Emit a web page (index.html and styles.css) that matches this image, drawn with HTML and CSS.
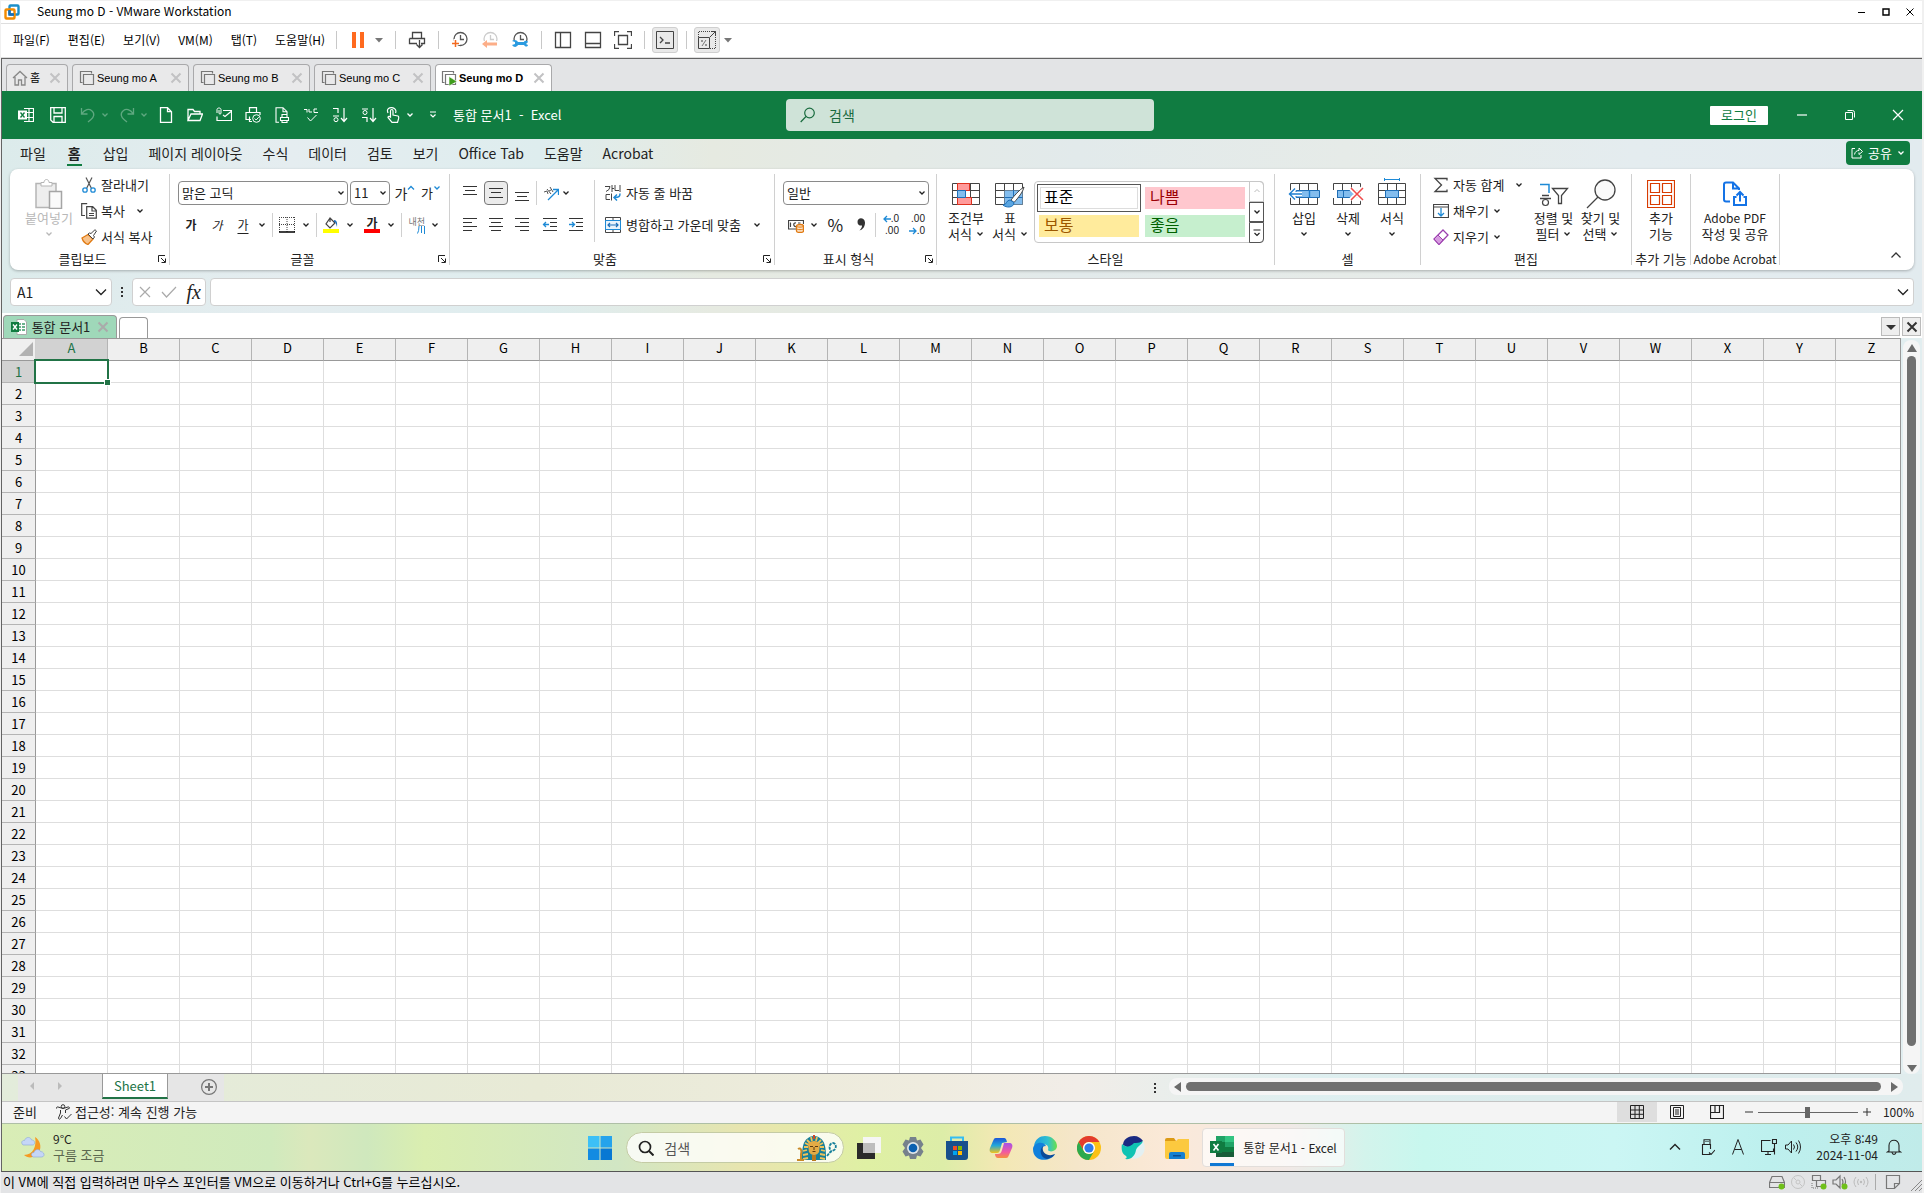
FILE: index.html
```html
<!DOCTYPE html>
<html lang="ko">
<head>
<meta charset="utf-8">
<title>Seung mo D - VMware Workstation</title>
<link rel="stylesheet" href="styles.css">
</head>
<body>
<svg class="defs" aria-hidden="true">
  <symbol id="chev" viewBox="0 0 8 8"><path d="M1.5 2.5 4 5l2.500-2.500" fill="none" stroke="currentColor" stroke-width="1.300"/></symbol>
  <symbol id="chev-lg" viewBox="0 0 12 12"><path d="M1 3.500l5 5 5-5" fill="none" stroke="currentColor" stroke-width="1.300"/></symbol>
  <symbol id="tri" viewBox="0 0 8 8"><path d="M0 2h8L4 6.500z" fill="currentColor"/></symbol>
  <symbol id="x" viewBox="0 0 12 12"><path d="M1.500 1.500l9 9M10.500 1.500l-9 9" fill="none" stroke="currentColor" stroke-width="2"/></symbol>
  <symbol id="x-thin" viewBox="0 0 12 12"><path d="M1 1l10 10M11 1L1 11" fill="none" stroke="currentColor" stroke-width="1.200"/></symbol>
  <symbol id="launch" viewBox="0 0 8 8"><path d="M.5 7V.5H7M3 3l4 4M7.500 3.500v4h-4" fill="none" stroke="currentColor"/></symbol>
  <symbol id="vm" viewBox="0 0 16 16"><path d="M3.500 12.500h-2v-11h11v2M4.500 4.500h10v10h-10z" fill="none" stroke="#777" stroke-width="1.200"/></symbol>
  <symbol id="clock" viewBox="0 0 18 18"><circle cx="9.500" cy="8" r="6.500" fill="none" stroke="currentColor" stroke-width="1.300"/><path d="M9.500 4v4.500H13" fill="none" stroke="currentColor" stroke-width="1.300"/></symbol>
  <symbol id="grid" viewBox="0 0 28 22"><path d="M.5.5h27v21H.5z" fill="#fff"/><path d="M.5.5h27v21H.5zM.5 7.500h27M.5 14.500h27M9.500 0v22M18.500 0v22" fill="none" stroke="#444"/></symbol>
  <symbol id="excel" viewBox="0 0 24 24"><path d="M6 1h9v6H6z" fill="#21a366"/><path d="M15 1h9v6h-9z" fill="#33c481"/><path d="M6 7h9v10H6z" fill="#107c41"/><path d="M15 7h9v5h-9z" fill="#21a366"/><path d="M15 12h9v5h-9z" fill="#107c41"/><path d="M6 17h18v5H6z" fill="#185c37"/><path d="M0 6h12v12H0z" fill="#107c41"/><path d="M3.500 9l5 6.500M8.500 9l-5 6.500" stroke="#fff" stroke-width="1.600"/></symbol>
</svg>

<header class="vm-title">
  <svg class="i16" viewBox="0 0 16 16"><rect x="5.500" y="1.500" width="9" height="9" rx="1" fill="none" stroke="#1b8fc9" stroke-width="2.400"/><rect x="1.500" y="5.500" width="9" height="9" rx="1" fill="none" stroke="#f38b00" stroke-width="2.400"/><path d="M5.500 6V10.500H10" fill="none" stroke="#1b6fb5" stroke-width="2.400"/></svg>
  <span class="vm-title-text">Seung mo D - VMware Workstation</span>
  <div class="win-ctl">
    <button aria-label="최소화"><svg viewBox="0 0 8 8"><path d="M0 4.500h7" stroke="#000"/></svg></button>
    <button aria-label="최대화"><svg viewBox="0 0 8 8"><path d="M1 1h6v6H1z" fill="none" stroke="#000" stroke-width="1.400"/></svg></button>
    <button aria-label="닫기"><svg viewBox="0 0 8 8"><path d="M.5.5l7 7M7.500.5l-7 7" stroke="#000"/></svg></button>
  </div>
</header>

<nav class="vm-menu">
  <div class="vm-menu-items"><button>파일(F)</button><button>편집(E)</button><button>보기(V)</button><button>VM(M)</button><button>탭(T)</button><button>도움말(H)</button></div>
  <i class="vsep"></i>
  <button class="mi" aria-label="일시 중지"><svg class="i18" viewBox="0 0 18 18"><path d="M3 1h4v16H3zM11 1h4v16h-4z" fill="#ff6a1f"/></svg></button>
  <button class="mi-arrow" aria-label="전원"><svg class="i8"><use href="#tri"/></svg></button>
  <i class="vsep"></i>
  <button class="mi" aria-label="Ctrl+Alt+Del 보내기"><svg class="i18" viewBox="0 0 18 18"><path d="M4.500 7V1.500h9V7M1.500 7.500h15v5H13M1.500 7.500v5H9M11.500 9v7M8.500 13.500l3 3 3-3" fill="none" stroke="#444" stroke-width="1.300"/></svg></button>
  <i class="vsep"></i>
  <div class="mi-group">
    <button class="mi" aria-label="스냅샷 찍기"><svg class="i18" viewBox="0 0 18 18"><use href="#clock" color="#555"/><path d="M0 12h9M4.500 8v9" stroke="#fff" stroke-width="4"/><path d="M1 12.500h7M4.500 9v7" stroke="#f36a1f" stroke-width="1.500"/></svg></button>
    <button class="mi" aria-label="스냅샷으로 되돌리기"><svg class="i18" viewBox="0 0 18 18"><use href="#clock" color="#ccc"/><path d="M0 10h18v7H0z" fill="#fff"/><path d="M6 9l-5 4 5 4v-2.500h10v-3H6z" fill="#fcae88"/></svg></button>
    <button class="mi" aria-label="스냅샷 관리"><svg class="i18" viewBox="0 0 18 18"><use href="#clock" color="#555"/><path d="M0 10h18v7H0z" fill="#fff"/><path d="M1 10l3 1v2l-3 1c2 3 5 2 6 0h6c2 3 4 1 4 0l-2-1 2-2c-1-2-4-1-4 0H7c-1-2-4-3-6-1z" fill="#2b9be0"/></svg></button>
  </div>
  <i class="vsep"></i>
  <div class="mi-group">
    <button class="mi" aria-label="라이브러리"><svg class="i18" viewBox="0 0 18 18"><path d="M1.500 1.500h15v15h-15zM6.500 1.500v15" fill="none" stroke="#444" stroke-width="1.300"/></svg></button>
    <button class="mi" aria-label="썸네일"><svg class="i18" viewBox="0 0 18 18"><path d="M1.500 1.500h15v15h-15zM1.500 12.500h15" fill="none" stroke="#444" stroke-width="1.300"/></svg></button>
    <button class="mi" aria-label="전체 화면"><svg class="i18" viewBox="0 0 18 18"><path d="M.5 5V.5H5M13 .5h4.500V5M17.500 13v4.500H13M5 17.500H.5V13M4.500 4.500h9v9h-9z" fill="none" stroke="#444" stroke-width="1.300"/></svg></button>
  </div>
  <i class="vsep"></i>
  <button class="mi on" aria-label="콘솔 보기"><svg class="i18" viewBox="0 0 18 18"><path d="M.5.500h17v17H.5z" fill="none" stroke="#444"/><path d="M4 6l3 3-3 3M9 12h5" fill="none" stroke="#444" stroke-width="1.300"/></svg></button>
  <i class="vsep"></i>
  <button class="mi on" aria-label="화면 맞춤"><svg class="i18" viewBox="0 0 18 18"><path d="M.5 6.500h11v11H.5z" fill="none" stroke="#444"/><path d="M.5 6V.500h17v17H12" fill="none" stroke="#444" stroke-dasharray="1 1"/><path d="M12 6l5-5M13 .500h4.500V5" fill="none" stroke="#444"/><path d="M4 15l4-6" stroke="#777"/><circle cx="4" cy="10" r="1" fill="#777"/><circle cx="8" cy="14" r="1" fill="#777"/></svg></button>
  <button class="mi-arrow tight" aria-label="화면 맞춤 옵션"><svg class="i8"><use href="#tri"/></svg></button>
</nav>

<nav class="vm-tabs">
  <button class="vt home"><svg class="i16" viewBox="0 0 16 16"><path d="M1 8l7-6.500L15 8M3 7v8h3.500v-5h3v5H13V7" fill="none" stroke="#888" stroke-width="1.300"/></svg><span>홈</span><svg class="i12 vx"><use href="#x"/></svg></button>
  <button class="vt"><svg class="i16"><use href="#vm"/></svg><span>Seung mo A</span><svg class="i12 vx"><use href="#x"/></svg></button>
  <button class="vt"><svg class="i16"><use href="#vm"/></svg><span>Seung mo B</span><svg class="i12 vx"><use href="#x"/></svg></button>
  <button class="vt"><svg class="i16"><use href="#vm"/></svg><span>Seung mo C</span><svg class="i12 vx"><use href="#x"/></svg></button>
  <button class="vt active"><svg class="i16" viewBox="0 0 16 16"><use href="#vm"/><path d="M8 6.500l8 5-8 4.500z" fill="#3f9c1c" stroke="#fff" stroke-width=".6"/></svg><span>Seung mo D</span><svg class="i12 vx"><use href="#x"/></svg></button>
</nav>

<main class="guest">
  <header class="xl-title">
    <div class="qat">
      <button aria-label="Excel"><svg class="i16" viewBox="0 0 16 16"><path d="M6 1.500h9.500v13H6M11 1v14M6 5.500h9M6 10.500h9" fill="none" stroke="#fff" stroke-width="1.200"/><path d="M0 3.500h9v9H0z" fill="#fff"/><path d="M2.500 5.500l4 5M6.500 5.500l-4 5" stroke="#107c41" stroke-width="1.300"/></svg></button>
      <button aria-label="저장"><svg class="i16" viewBox="0 0 16 16"><path d="M.7.700h14.600v14.600H3L.7 13zM4 .7V6h8V.7M4 15V9.500h8V15" fill="none" stroke="#fff" stroke-width="1.300"/></svg></button>
      <button class="dim" aria-label="실행 취소"><svg class="i16" viewBox="0 0 16 16"><path d="M1.500 1v6h6M1.500 7C5 2 9 1.500 11.500 3.500c4 3 2 7-.5 9L8 15" fill="none" stroke="currentColor" stroke-width="1.300"/></svg><svg class="i8"><use href="#chev"/></svg></button>
      <button class="dim" aria-label="다시 실행"><svg class="i16" viewBox="0 0 16 16"><path d="M14.500 1v6h-6M14.500 7C11 2 7 1.500 4.500 3.500c-4 3-2 7 .5 9L8 15" fill="none" stroke="currentColor" stroke-width="1.300"/></svg><svg class="i8"><use href="#chev"/></svg></button>
      <button aria-label="새로 만들기"><svg class="i16" viewBox="0 0 16 16"><path d="M2.500.700h7l4 4v10.600h-11zM9.500.7v4h4" fill="none" stroke="#fff" stroke-width="1.300"/></svg></button>
      <button aria-label="열기"><svg class="i16" viewBox="0 0 16 16"><path d="M1 13.500v-11h5l1.500 2H13v2.500M1 13.500L4 7h11.500L13 13.500z" fill="none" stroke="#fff" stroke-width="1.300"/></svg></button>
      <button aria-label="전자 메일"><svg class="i16" viewBox="0 0 16 16"><path d="M7 3.500h8.500v10H1V9.500M7 8l2 1.500 6-5" fill="none" stroke="#fff" stroke-width="1.200"/><path d="M1 6V2.500c0-2 4-2 4 0V6c0 1.500-2 1.500-2 0V3" fill="none" stroke="#fff"/></svg></button>
      <button aria-label="빠른 인쇄"><svg class="i16" viewBox="0 0 16 16"><path d="M4.500 5V.700h7V5M6 12.500H1V5.500h14V8M4.500 9.500v5H7" fill="none" stroke="#fff" stroke-width="1.200"/><circle cx="11.500" cy="11.500" r="3.800" fill="none" stroke="#fff"/><path d="M9.700 11.500l1.500 1.500 2.500-2.800" fill="none" stroke="#fff"/></svg></button>
      <button aria-label="인쇄 미리 보기"><svg class="i16" viewBox="0 0 16 16"><path d="M5 15.300H2V.700h7l4 4V7M9 .7v4h4M8 10V7.500h5V10M6.500 10.500h8v3h-8zM8 13.500v2h5v-2" fill="none" stroke="#fff" stroke-width="1.100"/></svg></button>
      <button aria-label="맞춤법 검사"><svg class="i16" viewBox="0 0 16 16"><path d="M1 2.500h3v3M6 2v3h3M11 2v3.500h4M11 2h3M4.500 10.500L7.500 14l6-6" fill="none" stroke="#fff"/></svg></button>
      <button aria-label="오름차순 정렬"><svg class="i16" viewBox="0 0 16 16"><path d="M1 1.500h5V6M1 9h6M12 1v13M9 11l3 3.500 3-3.500" fill="none" stroke="#fff" stroke-width="1.200"/><circle cx="4" cy="12.700" r="2" fill="none" stroke="#fff"/></svg></button>
      <button aria-label="내림차순 정렬"><svg class="i16" viewBox="0 0 16 16"><path d="M1 2h6M1 10.500h5V15M12 1v13M9 11l3 3.500 3-3.500" fill="none" stroke="#fff" stroke-width="1.200"/><circle cx="4" cy="5.500" r="2" fill="none" stroke="#fff"/></svg></button>
      <button class="touch" aria-label="터치/마우스 모드"><svg class="i16" viewBox="0 0 16 16"><path d="M5.500 10V4c0-2 2.500-2 2.500 0v4l5 1c1 .5 1 1 .5 3l-1 3.300H7L3 10.500c0-1.500 1.500-1.500 2.500-.5zM3 6C1 1 5 .500 7 .700s5 2 3.500 5.300" fill="none" stroke="#fff" stroke-width="1.200"/></svg><svg class="i8"><use href="#chev"/></svg></button>
      <button aria-label="빠른 실행 도구 모음 사용자 지정"><svg class="i8" viewBox="0 0 8 8"><path d="M1 1h6M1.500 3.500L4 6l2.500-2.500" fill="none" stroke="#fff" stroke-width="1.200"/></svg></button>
      <span class="doc">통합 문서1&nbsp; -&nbsp; Excel</span>
    </div>
    <label class="xl-search"><svg class="i16" viewBox="0 0 16 16"><circle cx="9.500" cy="6" r="4.800" fill="none" stroke="#196b3e" stroke-width="1.200"/><path d="M6 9.500L.7 15" stroke="#196b3e" stroke-width="1.200"/></svg><input type="text" placeholder="검색" aria-label="검색"></label>
    <div class="xl-ctl">
      <button class="login">로그인</button>
      <button class="wc" aria-label="최소화"><svg class="i12" viewBox="0 0 12 12"><path d="M1 6h10" stroke="#fff" stroke-width="1.200"/></svg></button>
      <button class="wc" aria-label="이전 크기로"><svg class="i12" viewBox="0 0 12 12"><path d="M1.500 3.500h7v7h-7zM3.500 1.500h5q2 0 2 2v5" fill="none" stroke="#fff"/></svg></button>
      <button class="wc" aria-label="닫기"><svg class="i12"><use href="#x-thin"/></svg></button>
    </div>
  </header>

  <section class="pane">
    <nav class="rtabs">
      <button>파일</button><button class="cur">홈</button><button>삽입</button><button>페이지 레이아웃</button><button>수식</button><button>데이터</button><button>검토</button><button>보기</button><button>Office Tab</button><button>도움말</button><button>Acrobat</button>
      <button class="share"><svg class="i12" viewBox="0 0 12 12"><path d="M4 1.500H1v9.500h9V8M3.500 7.500C4 4.500 6 3.500 8 3.500V1l3.500 3.500L8 7.500V5.500" fill="none" stroke="#fff"/></svg>공유<svg class="i8"><use href="#chev"/></svg></button>
    </nav>

    <div class="ribbon">
      <section class="rg g-clip">
        <div class="rbody">
          <button class="big paste" disabled><span class="bi"><svg width="28" height="30" viewBox="0 0 28 30"><path d="M1 4.500h20v24H1z" fill="#eee" stroke="#b5b5b5" stroke-width="1.500"/><path d="M6 7V3.500h3c0-4 5-4 5 0h3V7z" fill="#fff" stroke="#b5b5b5"/><path d="M14.500 12.500h12v17h-12z" fill="#fafafa" stroke="#a5a5a5" stroke-width="1.500"/></svg></span><span>붙여넣기</span><span><svg class="i8"><use href="#chev"/></svg></span></button>
          <div class="list">
            <button><svg class="i16" viewBox="0 0 16 16"><path d="M5 .5l5.500 11M11 .5L5.500 11.500" stroke="#555" stroke-width="1.200"/><circle cx="4" cy="13" r="2.200" fill="none" stroke="#1e8ad6" stroke-width="1.300"/><circle cx="12" cy="13" r="2.200" fill="none" stroke="#1e8ad6" stroke-width="1.300"/></svg>잘라내기</button>
            <button><svg class="i16" viewBox="0 0 16 16"><path d="M4 12.500H.7V.700h5.500M5.700 3.700h6l3.600 3.500v8H5.700zM11 4v4h4M8 10.500h5M8 12.500h5" fill="none" stroke="#444" stroke-width="1.200"/></svg>복사<svg class="i8 far"><use href="#chev"/></svg></button>
            <button><svg class="i16" viewBox="0 0 16 16"><path d="M1 9l6-3.500 5 4.500-5 5.500c-3-1-5-3-6-6.500z" fill="#f8c28a" stroke="#e07a12" stroke-width="1.300"/><path d="M7 5l5 5 1.500-2-1-1.500L15.500 2 14 .7 10 4.500 8.500 4z" fill="#fff" stroke="#444"/></svg>서식 복사</button>
          </div>
        </div>
        <footer class="opt">클립보드<button aria-label="클립보드 옵션"><svg class="i8"><use href="#launch"/></svg></button></footer>
      </section>

      <section class="rg g-font">
        <div class="rbody rows">
          <div class="row">
            <label class="sel fname"><select aria-label="글꼴"><option>맑은 고딕</option></select><svg class="i8"><use href="#chev"/></svg></label>
            <label class="sel fsize"><select aria-label="글꼴 크기"><option>11</option></select><svg class="i8"><use href="#chev"/></svg></label>
            <button class="tool lg">가<svg class="i8 sup blue" viewBox="0 0 8 8"><path d="M1 5.500L4 2.500l3 3" fill="none" stroke="currentColor" stroke-width="1.300"/></svg></button>
            <button class="tool">가<svg class="i8 sup blue"><use href="#chev"/></svg></button>
          </div>
          <div class="row">
            <button class="tool b">가</button><button class="tool it">가</button><button class="tool u">가</button><button class="cv" aria-label="밑줄 옵션"><svg class="i8"><use href="#chev"/></svg></button>
            <i class="tsep"></i>
            <button class="tool" aria-label="테두리"><svg class="i16" viewBox="0 0 16 16"><path d="M.5 0v15M8 0v15M15.500 0v15M0 .5h16M0 7.500h16" stroke="#444" stroke-dasharray="1 1" fill="none"/><path d="M0 15h16" stroke="#000" stroke-width="1.500"/></svg></button><button class="cv" aria-label="테두리 옵션"><svg class="i8"><use href="#chev"/></svg></button>
            <i class="tsep"></i>
            <button class="tool" aria-label="채우기 색"><svg class="i16" viewBox="0 0 16 16"><path d="M0 12h16v4H0z" fill="#ff0"/><path d="M7 1L3 7l4 4 5-5zM7 1v4" fill="#fff" stroke="#444" stroke-width="1.200"/><path d="M11 3c3 0 3.500 3 3 7-1-3-1-5-3-5z" fill="#1e6fb8"/></svg></button><button class="cv" aria-label="채우기 색 옵션"><svg class="i8"><use href="#chev"/></svg></button>
            <button class="tool fc">가</button><button class="cv" aria-label="글꼴 색 옵션"><svg class="i8"><use href="#chev"/></svg></button>
            <i class="tsep"></i>
            <button class="tool ruby"><span>내천</span><svg class="i8" viewBox="0 0 8 8"><path d="M2 0q0 5-1.500 7.500M4.500 0v7M7.500 0v8" fill="none" stroke="#1e8ad6"/></svg></button><button class="cv" aria-label="윗주 옵션"><svg class="i8"><use href="#chev"/></svg></button>
          </div>
        </div>
        <footer class="opt">글꼴<button aria-label="글꼴 옵션"><svg class="i8"><use href="#launch"/></svg></button></footer>
      </section>

      <section class="rg g-align">
        <div class="rbody">
          <div class="rows left">
            <div class="row">
              <button class="tool" aria-label="위쪽 맞춤"><svg class="i16" viewBox="0 0 16 16"><path d="M1 1.500h14M3 5.500h10M1 9.500h14" stroke="#333"/></svg></button>
              <button class="tool on" aria-label="가운데 맞춤"><svg class="i16" viewBox="0 0 16 16"><path d="M1 3.500h14M3 7.500h10M1 12.500h14" stroke="#333"/></svg></button>
              <button class="tool" aria-label="아래쪽 맞춤"><svg class="i16" viewBox="0 0 16 16"><path d="M1 7.500h14M3 11.500h10M1 15.500h14" stroke="#333"/></svg></button>
              <i class="asep"></i>
              <button class="tool" aria-label="방향"><svg class="i16" viewBox="0 0 16 16"><path d="M5 15L15 5M10 4.500h5.500V10" fill="none" stroke="#1e8ad6" stroke-width="1.300"/><path d="M1 7l3-1 1 3M4 4l4 5M7 2l3 5M6 6l2-1" fill="none" stroke="#555"/></svg></button><button class="cv" aria-label="방향 옵션"><svg class="i8"><use href="#chev"/></svg></button>
            </div>
            <div class="row">
              <button class="tool" aria-label="왼쪽 맞춤"><svg class="i16" viewBox="0 0 16 16"><path d="M1 1.500h14M1 5.500h9M1 9.500h14M1 13.500h9" stroke="#333"/></svg></button>
              <button class="tool" aria-label="가로 가운데"><svg class="i16" viewBox="0 0 16 16"><path d="M1 1.500h14M3 5.500h10M1 9.500h14M3 13.500h10" stroke="#333"/></svg></button>
              <button class="tool" aria-label="오른쪽 맞춤"><svg class="i16" viewBox="0 0 16 16"><path d="M1 1.500h14M6 5.500h9M1 9.500h14M6 13.500h9" stroke="#333"/></svg></button>
              <i class="asep"></i>
              <button class="tool" aria-label="내어쓰기"><svg class="i16" viewBox="0 0 16 16"><path d="M1 1.500h14M8 5.500h7M8 9.500h7M1 13.500h14" stroke="#333"/><path d="M7 7.500H1.500M4 5L1.500 7.500 4 10" fill="none" stroke="#1e8ad6" stroke-width="1.300"/></svg></button>
              <button class="tool" aria-label="들여쓰기"><svg class="i16" viewBox="0 0 16 16"><path d="M1 1.500h14M8 5.500h7M8 9.500h7M1 13.500h14" stroke="#333"/><path d="M1 7.500h5.500M4 5l2.500 2.500L4 10" fill="none" stroke="#1e8ad6" stroke-width="1.300"/></svg></button>
            </div>
          </div>
          <i class="bsep"></i>
          <div class="rows wrapcol">
            <button class="wide"><svg class="i16" viewBox="0 0 16 16"><path d="M0 1.500h5Q5 5 1 6.500M7 0v7M7 3.500h2M10 0v5.500h4M15 0v7M1 9.500v5h4M1 9.500h4M6.500 8.500v7" fill="none" stroke="#444"/><path d="M15 8.500c0 3-1 4-5.500 4M12 9.500l-3 3 3 3" fill="none" stroke="#1e8ad6" stroke-width="1.500"/></svg>자동 줄 바꿈</button>
            <button class="wide"><svg class="i16" viewBox="0 0 16 16"><path d="M.5.500h15v15H.5zM.5 3.500h15M.5 12.500h15M8 .5v3M8 12.500v3" fill="none" stroke="#444"/><path d="M.5 3.500h15v9H.5z" fill="#eaf4fc" stroke="#1e8ad6"/><path d="M3 8h10M5 6L3 8l2 2M11 6l2 2-2 2" fill="none" stroke="#1e6fb8" stroke-width="1.200"/></svg>병합하고 가운데 맞춤<svg class="i8 far"><use href="#chev"/></svg></button>
          </div>
        </div>
        <footer class="opt">맞춤<button aria-label="맞춤 옵션"><svg class="i8"><use href="#launch"/></svg></button></footer>
      </section>

      <section class="rg g-num">
        <div class="rbody rows">
          <div class="row"><label class="sel"><select aria-label="표시 형식"><option>일반</option></select><svg class="i8"><use href="#chev"/></svg></label></div>
          <div class="row">
            <button class="tool" aria-label="회계 표시 형식"><svg class="i16" viewBox="0 0 16 16"><path d="M8 12H.5V3.500h15V7M3 6H2.500v3.500H3M8 6C5 5 5 10 8 9.500M10 6h2.500" fill="none" stroke="#444" stroke-width="1.200"/><path d="M8.500 9c0-2 7-2 7 0v5c0 2-7 2-7 0z" fill="#fbe0c4" stroke="#e07a12" stroke-width="1.300"/><path d="M8.500 9c0 1.500 7 1.500 7 0M8.500 11.500c0 1.500 7 1.500 7 0" fill="none" stroke="#e07a12"/></svg></button><button class="cv" aria-label="회계 옵션"><svg class="i8"><use href="#chev"/></svg></button>
            <button class="tool pct">%</button>
            <button class="tool" aria-label="쉼표 스타일"><svg class="i16" viewBox="0 0 16 16"><path d="M4.500 5c0-5 7-5 7.500.5 0 4-2 7-5.500 8 2-2 2.500-3.500 2.500-5-2 .5-4.500-.5-4.500-3.500z" fill="#333"/></svg></button>
            <i class="asep"></i>
            <button class="tool dec"><span><svg class="i8 blue" viewBox="0 0 8 8"><path d="M8 4H1M4 1L1 4l3 3" fill="none" stroke="currentColor" stroke-width="1.300"/></svg>.0</span><span>.00</span></button>
            <button class="tool dec"><span>.00</span><span><svg class="i8 blue" viewBox="0 0 8 8"><path d="M0 4h7M4 1l3 3-3 3" fill="none" stroke="currentColor" stroke-width="1.300"/></svg>.0</span></button>
          </div>
        </div>
        <footer class="opt">표시 형식<button aria-label="표시 형식 옵션"><svg class="i8"><use href="#launch"/></svg></button></footer>
      </section>

      <section class="rg g-style">
        <div class="rbody">
          <button class="big"><span class="bi"><svg width="28" height="22" viewBox="0 0 28 22"><use href="#grid"/><path d="M5.500.500h12v7h-12zM5.500 14.500h14v7h-14z" fill="#ff9a9a" stroke="#e0301e"/><path d="M5.500 7.500h8v7h-8z" fill="#83bdee" stroke="#1e6fb8"/></svg></span><span>조건부</span><span>서식 <svg class="i8"><use href="#chev"/></svg></span></button>
          <button class="big"><span class="bi"><svg width="32" height="28" viewBox="0 0 32 28"><svg x="1" y="3" width="28" height="22"><use href="#grid"/></svg><path d="M10.500 10.500h18v14h-18z" fill="#83bdee"/><path d="M10.500 17.500h18M19.500 10v14" stroke="#1e6fb8"/><path d="M30 7C25 10 20 16 17 20l3 2.500C24 18 29 12 30 7z" fill="#fff" stroke="#444"/><path d="M16 20c-4 0-3 5-7 5 3 3 11 3 11-2.500z" fill="#5aa5e0" stroke="#1e6fb8"/></svg></span><span>표</span><span>서식 <svg class="i8"><use href="#chev"/></svg></span></button>
          <div class="gallery">
            <div class="cells"><button class="c-std">표준</button><button class="c-bad">나쁨</button><button class="c-neu">보통</button><button class="c-good">좋음</button></div>
            <div class="gscroll"><button aria-label="위로" class="off"><svg class="i8" viewBox="0 0 8 8"><path d="M1.500 5L4 2.500 6.500 5" fill="none" stroke="currentColor"/></svg></button><button aria-label="아래로"><svg class="i8"><use href="#chev"/></svg></button><button aria-label="자세히"><svg class="i8" viewBox="0 0 8 8"><path d="M.5 1h7M1.500 4L4 6.500 6.500 4" fill="none" stroke="currentColor" stroke-width="1.200"/></svg></button></div>
          </div>
        </div>
        <footer>스타일</footer>
      </section>

      <section class="rg g-cell">
        <div class="rbody">
          <button class="big"><span class="bi"><svg width="32" height="22" viewBox="0 0 32 22"><svg x="2" width="28" height="22"><use href="#grid"/></svg><path d="M8 7.500h23.500v7H8z" fill="#83bdee" stroke="#1e6fb8"/><path d="M14 11H2M7 5.500L1.500 11 7 16.500" fill="none" stroke="#fff" stroke-width="4"/><path d="M14 11H1.500M7 5.500L1.500 11 7 16.500M21.500 7.500v7" fill="none" stroke="#1e7fd0" stroke-width="1.400"/></svg></span><span>삽입</span><span><svg class="i8"><use href="#chev"/></svg></span></button>
          <button class="big"><span class="bi"><svg width="32" height="22" viewBox="0 0 32 22"><svg x="1" width="28" height="22"><use href="#grid"/></svg><path d="M0 7h5v8H0z" fill="#fff"/><path d="M5.500 7.500h16v7h-16zM11.500 7.500v7" fill="#83bdee" stroke="#1e6fb8"/><path d="M19 5l12 12M31 5L19 17" stroke="#fff" stroke-width="5"/><path d="M19 5l12 12M31 5L19 17" stroke="#f04a4a" stroke-width="1.500"/></svg></span><span>삭제</span><span><svg class="i8"><use href="#chev"/></svg></span></button>
          <button class="big"><span class="bi"><svg width="28" height="32" viewBox="0 0 28 32"><svg y="5" width="28" height="22"><use href="#grid"/></svg><path d="M7.500 12.500h13v7h-13z" fill="#83bdee" stroke="#1e6fb8"/><path d="M6.500 1.500h15M6.500 0v3M21.500 0v3" stroke="#1e8ad6"/></svg></span><span>서식</span><span><svg class="i8"><use href="#chev"/></svg></span></button>
        </div>
        <footer>셀</footer>
      </section>

      <section class="rg g-edit">
        <div class="rbody">
          <div class="list">
            <button><svg class="i16" viewBox="0 0 16 16"><path d="M14 3.500V1.500H2L8.500 8 2 14.500h12v-2" fill="none" stroke="#444" stroke-width="1.300"/></svg>자동 합계<svg class="i8 far"><use href="#chev"/></svg></button>
            <button><svg class="i16" viewBox="0 0 16 16"><path d="M.5 1.500h15v13H.5zM.5 4h15" fill="none" stroke="#444" stroke-width="1.200"/><path d="M8 5v8M5 10l3 3 3-3" fill="none" stroke="#1e8ad6" stroke-width="1.300"/></svg>채우기<svg class="i8"><use href="#chev"/></svg></button>
            <button><svg class="i16" viewBox="0 0 16 16"><path d="M10 1l5 5-9 9.500L1 10z" fill="#fff" stroke="#9b3fae" stroke-width="1.300"/><path d="M5 6l5 5-4 4.500L1 10z" fill="#d79be0" stroke="#9b3fae"/></svg>지우기<svg class="i8"><use href="#chev"/></svg></button>
          </div>
          <button class="big"><span class="bi"><svg width="30" height="26" viewBox="0 0 30 26"><path d="M1 3.500h9V12" fill="none" stroke="#1e8ad6" stroke-width="1.500"/><path d="M3 14.500h7M1 17.500h11M13.500 7.500h15l-6 7v8h-3v-8z" fill="none" stroke="#444" stroke-width="1.300"/><circle cx="6.500" cy="21.500" r="3" fill="none" stroke="#444" stroke-width="1.200"/></svg></span><span>정렬 및</span><span>필터 <svg class="i8"><use href="#chev"/></svg></span></button>
          <button class="big"><span class="bi"><svg width="30" height="30" viewBox="0 0 30 30"><circle cx="19" cy="11" r="10" fill="#fafafa" stroke="#444" stroke-width="1.300"/><path d="M12 18L1 29" stroke="#444" stroke-width="1.300"/></svg></span><span>찾기 및</span><span>선택 <svg class="i8"><use href="#chev"/></svg></span></button>
        </div>
        <footer>편집</footer>
      </section>

      <section class="rg g-add">
        <div class="rbody"><button class="big"><span class="bi"><svg width="28" height="28" viewBox="0 0 28 28"><path d="M.5.500h27v27H.5zM3.500 3.500h9v9h-9zM15.500 3.500h9v9h-9zM3.500 15.500h9v9h-9zM15.500 15.500h9v9h-9z" fill="none" stroke="#d83b01" stroke-width="1.200"/></svg></span><span>추가</span><span>기능</span></button></div>
        <footer>추가 기능</footer>
      </section>
      <section class="rg g-adobe">
        <div class="rbody"><button class="big"><span class="bi"><svg width="24" height="26" viewBox="0 0 24 26"><path d="M7 20.500H3q-2 0-2-2v-15q0-2 2-2h7l6 6V9M10 2v5.500h6M13.500 16H11v8h12v-8h-2.500M17 20.500v-9M13.500 14.500L17 11l3.500 3.500" fill="none" stroke="#1473e6" stroke-width="2"/></svg></span><span class="lat">Adobe PDF</span><span>작성 및 공유</span></button></div>
        <footer class="lat">Adobe Acrobat</footer>
      </section>
      <button class="collapse" aria-label="리본 축소"><svg class="i12" viewBox="0 0 12 12"><path d="M1.500 8.500L6 4l4.500 4.500" fill="none" stroke="#333" stroke-width="1.300"/></svg></button>
    </div>

    <div class="fbar">
      <label class="box name"><input type="text" value="A1" aria-label="이름 상자"><svg class="i12"><use href="#chev-lg"/></svg></label>
      <svg class="dots" viewBox="0 0 4 12"><path d="M1 1h2v2H1zM1 5h2v2H1zM1 9h2v2H1z" fill="#333"/></svg>
      <div class="box fx">
        <button aria-label="취소"><svg class="i12"><use href="#x-thin"/></svg></button>
        <button aria-label="입력"><svg class="i16" viewBox="0 0 16 16"><path d="M1 8l4.500 5L15 3" fill="none" stroke="currentColor" stroke-width="1.200"/></svg></button>
        <button class="fxb">fx</button>
      </div>
      <label class="box formula"><input type="text" aria-label="수식 입력줄"><svg class="i12"><use href="#chev-lg"/></svg></label>
    </div>
  </section>

  <nav class="otabs">
    <button class="ot"><svg class="i16" viewBox="0 0 16 16"><path d="M6 .500h7l2.500 2.500v12.500H6z" fill="#fff" stroke="#aaa"/><path d="M8 5h2M11 5h3M8 8h2M11 8h3M8 11h2M11 11h3" stroke="#3d9a68" stroke-width="1.500"/><path d="M0 3h8v10H0z" fill="#107c41"/><path d="M2 5.500l4 5M6 5.500l-4 5" stroke="#fff" stroke-width="1.400"/></svg>통합 문서1<svg class="i12 vx"><use href="#x"/></svg></button>
    <button class="ot-new" aria-label="새 탭"></button>
    <button class="ob first" aria-label="탭 목록"><svg class="i12" viewBox="0 0 12 12"><path d="M1 4h10L6 9z" fill="#333"/></svg></button>
    <button class="ob" aria-label="탭 닫기"><svg class="i12"><use href="#x"/></svg></button>
  </nav>

  <div class="sheet">
    <div class="cells-view"><table class="cells-table" id="cells"></table></div>
    <div class="vscroll"><svg class="i12" viewBox="0 0 12 12"><path d="M6 2l5 8H1z" fill="#6b6b6b"/></svg><i></i><svg class="i12" viewBox="0 0 12 12"><path d="M1 3h10L6 10z" fill="#6b6b6b"/></svg></div>
  </div>

  <div class="sbar">
    <div class="snav">
      <button aria-label="이전 시트"><svg class="i8" viewBox="0 0 8 8"><path d="M6 0v8L2 4z" fill="#bbb"/></svg></button>
      <button aria-label="다음 시트"><svg class="i8" viewBox="0 0 8 8"><path d="M2 0v8l4-4z" fill="#bbb"/></svg></button>
      <button class="stab">Sheet1</button>
      <button class="splus" aria-label="새 시트"><svg class="i16" viewBox="0 0 16 16"><circle cx="8" cy="8" r="7.400" fill="none" stroke="#777" stroke-width="1.200"/><path d="M4 8h8M8 4v8" stroke="#777" stroke-width="2"/></svg></button>
    </div>
    <svg class="dots" viewBox="0 0 4 12"><path d="M1 1h2v2H1zM1 5h2v2H1zM1 9h2v2H1z" fill="#333"/></svg>
    <div class="hscroll"><svg class="i12" viewBox="0 0 12 12"><path d="M2 6l7-5v10z" fill="#6b6b6b"/></svg><i></i><svg class="i12" viewBox="0 0 12 12"><path d="M10 6L3 1v10z" fill="#6b6b6b"/></svg></div>
  </div>

  <footer class="status">
    <span>준비</span>
    <button class="acc"><svg class="i16" viewBox="0 0 16 16"><circle cx="7" cy="2.500" r="1.800" fill="none" stroke="#333"/><path d="M1 4.500c-1 0-.5-2 1-1.500l5 1.500 5-1.500c1.500-.5 2 1.500 1 1.500L9.500 6v3M4.500 6v3l-2 5c0 1.500 1.500 1.500 2 .5L6.500 11M8.500 12.500l2 2.500 5-5" fill="none" stroke="#333"/></svg>접근성: 계속 진행 가능</button>
    <div class="views">
      <button class="on" aria-label="기본"><svg class="i14" viewBox="0 0 14 14"><path d="M.5.500h13v13H.5zM.5 5h13M.5 9.300h13M5 .5v13M9.300.5v13" fill="none" stroke="#222"/></svg></button>
      <button aria-label="페이지 레이아웃"><svg class="i14" viewBox="0 0 14 14"><path d="M.5.500h13v13H.5zM3.500 2.500h7v9h-7zM5 5h4M5 7h4M5 9h4" fill="none" stroke="#222"/></svg></button>
      <button aria-label="페이지 나누기"><svg class="i14" viewBox="0 0 14 14"><path d="M.5.500h13v13H.5zM5 .5v7h4.500v-7M.5 7.500H5" fill="none" stroke="#222" stroke-width="1.200"/></svg></button>
    </div>
    <div class="zoom"><button aria-label="축소"><svg class="i8" viewBox="0 0 8 8"><path d="M0 4h8" stroke="#333"/></svg></button><input type="range" min="0" max="100" value="50" aria-label="확대/축소"><button aria-label="확대"><svg class="i8" viewBox="0 0 8 8"><path d="M0 4h8M4 0v8" stroke="#333"/></svg></button><span>100%</span></div>
  </footer>

  <footer class="taskbar">
    <div class="weather"><svg width="24" height="24" viewBox="0 0 24 24"><path d="M14 2c5 3 7 10 4 15-3 6-11 7-15 3 9 0 13-9 11-18z" fill="#f59a23"/><path d="M2 10c-3-3 0-5 1.500-4.500C5 1 10 2 10.500 5c4 0 4 5 1 5z" fill="#c5d6f7" stroke="#8aa6dc" stroke-width=".6"/><path d="M12 22c-3-2-1-5 1-4.500 1-4 6-3.500 6.500-1 4 0 5 5.500 1 5.500z" fill="#c5d6f7" stroke="#8aa6dc" stroke-width=".6"/></svg><p><b>9°C</b><br>구름 조금</p></div>
    <div class="apps">
      <button class="start" aria-label="시작"><svg class="i24" viewBox="0 0 24 24"><path d="M0 0h11.500v11.500H0z" fill="#3cc0f7"/><path d="M12.500 0H24v11.500H12.500z" fill="#25a3ec"/><path d="M0 12.500h11.500V24H0z" fill="#128be2"/><path d="M12.500 12.500H24V24H12.500z" fill="#0878d3"/></svg></button>
      <label class="tsearch"><svg class="i16" viewBox="0 0 16 16"><circle cx="7" cy="7" r="5.500" fill="none" stroke="#222" stroke-width="1.700"/><path d="M11 11l4.500 4.500" stroke="#222" stroke-width="2"/></svg><input type="text" placeholder="검색" aria-label="작업 표시줄 검색"><svg width="40" height="26" viewBox="0 0 40 26"><path d="M5 25C5 14 5 2 17 1c12 1 12 13 12 24z" fill="#17809a"/><path d="M6 24l5-1M6 20l5-1M6 16l4-1M7 12l4 0M8 8l4 2M10 5l3 3M14 2l1 4M28 24l-5-1M28 20l-5-1M28 16l-4-1M27 12l-4 0M26 8l-4 2M24 5l-3 3M20 2l-1 4" stroke="#efc25a" stroke-width="1.800"/><path d="M11 9c2-4 10-4 12 0l-1 8c-2 4-8 4-10 0z" fill="#e3ab45"/><path d="M13 11.500h3M18 11.500h3M15.500 16.500h3M17 12v3" stroke="#5a3a13"/><path d="M15 20h4v6h-4z" fill="#b97a1f"/><path d="M17 0v4" stroke="#d04a2a" stroke-width="2"/><path d="M1 14c3-2 4 2 3 5v6M0 25h7" fill="none" stroke="#c98a28" stroke-width="2"/><path d="M30 21l4-5c-3-4-1-8 2-8s4 5 1 7l-5 3" fill="none" stroke="#17809a" stroke-width="1.800" stroke-dasharray="3 1"/></svg></label>
      <button aria-label="작업 보기"><svg class="i24" viewBox="0 0 24 24"><path d="M0 7h18v16H0z" fill="#2a2a2a"/><path d="M6 1h18v16H6z" fill="#f5f5f5"/><path d="M6 7h12v10H6z" fill="#bdbdbd"/></svg></button>
      <button aria-label="설정"><svg class="i24" viewBox="0 0 24 24"><path d="M9 1h6l1 3.500 3.500-1 3 5-2.500 3.500 2.500 3.500-3 5-3.500-1L15 23H9l-1-3.500-3.500 1-3-5L4 12 1.500 8.500l3-5 3.500 1z" fill="#76818c"/><circle cx="12" cy="12" r="6" fill="#dfe5ea"/><circle cx="12" cy="12" r="4.300" fill="#0a5fb0"/></svg></button>
      <button aria-label="스토어"><svg class="i24" viewBox="0 0 24 24"><path d="M6 5V1.500h12V5" fill="none" stroke="#35bdf2" stroke-width="2"/><path d="M1 5h22v16q0 3-3 3H4q-3 0-3-3z" fill="#17508c"/><path d="M8 10h4v4H8z" fill="#f25022"/><path d="M13 10h4v4h-4z" fill="#7fba00"/><path d="M8 15h4v4H8z" fill="#00a4ef"/><path d="M13 15h4v4h-4z" fill="#ffb900"/></svg></button>
      <button aria-label="Copilot"><svg class="i24" viewBox="0 0 24 24"><defs><linearGradient id="cp1" x2="0" y2="1"><stop stop-color="#1b55d8"/><stop offset=".5" stop-color="#23a7d8"/><stop offset="1" stop-color="#f2c31c"/></linearGradient><linearGradient id="cp2" x2="0" y2="1"><stop stop-color="#a552e8"/><stop offset=".6" stop-color="#f25aa0"/><stop offset="1" stop-color="#f7913d"/></linearGradient></defs><path d="M7 2h8c2 0 2 1 3 4l-5 1-2 7c-1 3-2 3-4 3H4c-3 0-4-2-3-5l3-7c1-2 1-3 3-3z" fill="url(#cp1)"/><path d="M17 22H9c-2 0-3-2-3-4h3c2 0 3-1 4-4l2-7h5c3 0 4 2 3 5l-3 7c-1 2-1 3-3 3z" fill="url(#cp2)"/></svg></button>
      <button aria-label="Edge"><svg class="i24" viewBox="0 0 24 24"><defs><linearGradient id="ed"><stop stop-color="#1c9be0"/><stop offset=".6" stop-color="#2fc0d0"/><stop offset="1" stop-color="#6be04a"/></linearGradient></defs><path d="M1 10C2 3 7 0 12 0c7 0 12 5 12 10 0 5-7 7-9 4 1-2 0-6-5-6-4 0-7 1-9 2z" fill="url(#ed)"/><path d="M0 13c0-6 10-9 13-3-5 0-5 5-3 8 3 4 9 3 12 0-4 8-22 9-22-5z" fill="#1180dc"/><path d="M10 10c-4 3-3 12 4 13 4-1 7-3 8-5-6 3-14 0-12-8z" fill="#0c4a98"/></svg></button>
      <button aria-label="Chrome"><svg class="i24" viewBox="0 0 24 24"><circle cx="12" cy="12" r="12" fill="#fbc116"/><path d="M1.600 6A12 12 0 0122.400 6H12a6 6 0 00-5.200 9z" fill="#e33b2e"/><path d="M1.600 6A12 12 0 0012 24l5.200-9a6 6 0 01-10.400 0z" fill="#2da94f"/><circle cx="12" cy="12" r="6" fill="#fff"/><circle cx="12" cy="12" r="4.600" fill="#2f7bea"/></svg></button>
      <button aria-label="Whale"><svg class="i24" viewBox="0 0 24 24"><path d="M2 9C2 3 8 0 13 0c4 0 7 2 9 5l-6 4-8 3z" fill="#1a2a82"/><path d="M22 5c4 8 1 18-11 18 0-6 3-12 11-18z" fill="#e3f0f2"/><path d="M1 8c5 4 8 3 12-1 2 0 6 0 9-2-1 4-6 5-7 9-1 6-5 10-11 9 2-1 2-2 1-3C1 18 0 13 1 8z" fill="#10c3b3"/></svg></button>
      <button aria-label="파일 탐색기"><svg class="i24" viewBox="0 0 24 24"><path d="M0 4q0-2 2-2h7l2 3H0z" fill="#dc9a16"/><path d="M0 5h11l2-2h11v18q0 2-2 2H2q-2 0-2-2z" fill="#fcc93f"/><path d="M4 23v-5q0-2 2-2h12q2 0 2 2v5z" fill="#1580d0"/><path d="M8 19h8v1.500H8z" fill="#0c4c90"/></svg></button>
      <button class="xl-task"><span><svg class="i24"><use href="#excel"/></svg></span>통합 문서1 - Excel</button>
    </div>
    <div class="tray">
      <svg class="i12" viewBox="0 0 12 12"><path d="M1 8.500l5-5 5 5" fill="none" stroke="#222" stroke-width="1.400"/></svg>
      <svg class="i16" viewBox="0 0 16 16"><path d="M5 5V.700h6V5M11.500 10V5.500h-8v10H11M7 2v1M9 2v1M10 13.500l2 2 4-4.500" fill="none" stroke="#222" stroke-width="1.100"/></svg>
      <svg class="i16" viewBox="0 0 16 16"><path d="M2.500 15.500L8 .500l5.500 15M4.500 10.500h7" fill="none" stroke="#222"/></svg>
      <svg class="i16" viewBox="0 0 16 16"><path d="M9.500 1.500h-9v11h12V9.500M4 15.500h6M7 12.500v3M11.500.500h4v4h-4zM13.500 4.500v11" fill="none" stroke="#222" stroke-width="1.100"/></svg>
      <svg class="i16" viewBox="0 0 16 16"><path d="M.5 6h2.500l3.500-4v12L3 10H.5zM8.500 5.500q2 2.500 0 5M11 3.500q3.500 4.500 0 9M13.500 1.500q4 6.500 0 13" fill="none" stroke="#222"/></svg>
      <time>오후 8:49<br>2024-11-04</time>
      <svg class="i16" viewBox="0 0 16 16"><path d="M3 12V6.500c0-7 10-7 10 0V12l1.500 1h-13zM6 13.500c.5 2.500 3.500 2.500 4 0" fill="none" stroke="#222" stroke-width="1.100"/></svg>
    </div>
  </footer>
</main>

<footer class="vm-status">
  <span>이 VM에 직접 입력하려면 마우스 포인터를 VM으로 이동하거나 Ctrl+G를 누르십시오.</span>
  <div class="dev">
    <svg class="i16" viewBox="0 0 16 16"><path d="M3 2.500h10l2.500 6v5H.5v-5zM.5 8.500h15" fill="none" stroke="#777" stroke-width="1.200"/><circle cx="12.500" cy="12.500" r="3" fill="#6fc01a"/></svg>
    <svg class="i16" viewBox="0 0 16 16"><circle cx="8" cy="8" r="6.500" fill="none" stroke="#c4c4c4"/><circle cx="8" cy="8" r="2" fill="none" stroke="#c4c4c4"/><path d="M4 4l2 2M10 10l2 2" stroke="#c4c4c4"/></svg>
    <svg class="i16" viewBox="0 0 16 16"><path d="M1.500 1.500h8v5h-8zM5.500 6.500h9v6h-9z" fill="none" stroke="#777" stroke-width="1.200"/><path d="M1 9v5h7" fill="none" stroke="#777" stroke-dasharray="1 1"/><circle cx="12.500" cy="12.500" r="3" fill="#6fc01a"/></svg>
    <svg class="i16" viewBox="0 0 16 16"><path d="M1 6h3l4-4v12l-4-4H1zM10 5q2 3 0 6M12 3q3 5 0 9" fill="none" stroke="#777" stroke-width="1.200"/><circle cx="12.500" cy="12.500" r="3" fill="#6fc01a"/></svg>
    <svg class="i16" viewBox="0 0 16 16"><circle cx="8" cy="8" r="1.200" fill="#bbb"/><path d="M5.500 5q-2 3 0 6M3 3q-4 5 0 10M10.500 5q2 3 0 6M13 3q4 5 0 10" fill="none" stroke="#bbb"/></svg>
    <i></i>
    <svg class="i16" viewBox="0 0 16 16"><path d="M1.500 1.500h13v8l-5 5h-8zM14.500 9.500h-5v5" fill="none" stroke="#777" stroke-width="1.200"/></svg>
    <svg class="i12 grip" viewBox="0 0 12 12"><path d="M12 1L1 12M12 5l-7 7M12 9l-3 3" stroke="#888"/></svg>
  </div>
</footer>
<script src="grid.js"></script>
</body>
</html>
```
FILE: grid.js
```js
// Builds the worksheet: lettered columns A-Z and numbered rows, A1 selected.
const table = document.getElementById('cells');
const letters = 'ABCDEFGHIJKLMNOPQRSTUVWXYZ'.split('');
let html = '<colgroup><col class="gutter">' + '<col>'.repeat(letters.length) + '</colgroup><thead><tr>'
  + '<th class="corner"><svg viewBox="0 0 14 14"><path d="M14 0v14H0z" fill="#b2b2b2"/></svg></th>'
  + letters.map((l, i) => `<th scope="col"${i ? '' : ' class="cur"'}>${l}</th>`).join('') + '</tr></thead><tbody>';
for (let r = 1; r <= 33; r++) {
  html += `<tr><th scope="row"${r > 1 ? '' : ' class="cur"'}>${r}</th>`
    + (r > 1 ? '<td></td>' : '<td class="picked"><i></i></td>')
    + '<td></td>'.repeat(letters.length - 1) + '</tr>';
}
table.innerHTML = html + '</tbody>';
```
FILE: styles.css
```css
* { box-sizing: border-box; }
body {
  margin: 0; height: 100vh; padding: 1px 2px 0 1px; overflow: hidden;
  display: flex; flex-direction: column; background: #f0f0f0; color: #222;
  font: 13px/16px "Noto Sans CJK KR", sans-serif;
}
button, input, select { font: inherit; color: inherit; background: none; border: 0; padding: 0; margin: 0; outline: 0; }
button { display: flex; align-items: center; justify-content: center; white-space: nowrap; }
svg { flex: none; display: block; }
p { margin: 0; }
.defs { position: absolute; width: 0; height: 0; }
.i8 { width: 8px; height: 8px; }
.i12 { width: 12px; height: 12px; }
.i14 { width: 14px; height: 14px; }
.i16 { width: 16px; height: 16px; }
.i18 { width: 18px; height: 18px; }
.i24 { width: 24px; height: 24px; }
.blue { color: #1e8ad6; }
.lat { font-size: 12px; }

/* virtual machine window */
.vm-title { flex: none; height: 23px; display: flex; align-items: center; padding: 0 0 1px 3px; background: #fff; border-bottom: 1px solid #dedede; color: #000; font-size: 12px; }
.vm-title-text { margin-left: 17px; padding-bottom: 1px; flex: 1; }
.win-ctl { display: flex; }
.win-ctl button { width: 24px; height: 22px; }
.win-ctl svg { width: 8px; height: 8px; }
.vm-menu { flex: none; height: 34px; display: flex; align-items: center; background: #fff; border-bottom: 1px solid #dedede; color: #000; font-size: 12px; padding: 0 0 2px 12px; }
.vm-menu-items { display: flex; gap: 18px; }
.vsep { width: 1px; height: 18px; background: #c8c8c8; margin: 0 11px; flex: none; }
.mi { width: 20px; height: 26px; }
.mi-group { display: flex; gap: 10px; }
.mi-arrow { width: 18px; color: #777; margin: 0 -4px 0 2px; }
.mi-arrow.tight { width: 16px; margin: 0; }
.mi.on { width: 26px; margin-left: -4px; background: #e9e9e9; border: 1px solid #cfcfcf; border-radius: 3px; }
.mi.on + .vsep { margin-left: 8px; }
.vm-tabs { flex: none; height: 33px; display: flex; align-items: flex-end; gap: 4px; padding-left: 4px; background: #e3e4e6; border-top: 1px solid #646464; border-left: 1px solid #646464; color: #000; }
.vt { width: 117px; height: 27px; padding: 0 6px; background: #e9e9ea; border: 1px solid #a9a9ab; border-bottom: 0; border-radius: 4px 4px 0 0; font: 11px/16px "Liberation Sans", "Noto Sans CJK KR", sans-serif; }
.vt span { flex: 1; text-align: left; margin-left: 2px; }
.vt.home { width: 62px; }
.vt.home, .vt.active { padding-left: 5px; }
.vt.active { background: #fff; font-weight: 700; }
.vx { color: #c2c2c4; }

/* guest desktop */
.guest { flex: 1; min-height: 0; display: flex; flex-direction: column; border-left: 1px solid #646464; border-bottom: 1px solid #555; background: #fff; }
.xl-title { flex: none; height: 48px; display: grid; grid-template-columns: 784fr 368fr 768fr; align-items: center; background: #107c41; color: #fff; }
.qat { display: flex; align-items: center; gap: 13px; padding-left: 16px; }
.qat button { gap: 5px; }
.qat button:nth-child(1) { margin-right: 3px; }
.qat button:nth-child(2) { margin-right: 1px; }
.qat .dim { color: #5fa880; margin-right: -3px; }
.qat .touch { margin: 0 2px 0 -5px; }
.qat .doc { margin-left: 3px; }
.xl-search { height: 32px; display: flex; align-items: center; gap: 13px; padding: 0 14px; background: #cfe3d8; border-radius: 4px; }
.xl-search input { flex: 1; min-width: 0; font-size: 14px; }
.xl-search input::placeholder { color: #196b3e; opacity: 1; }
.xl-ctl { display: flex; align-items: center; justify-content: flex-end; }
.login { width: 58px; height: 19px; margin-right: 10px; background: #fff; color: #107c41; border-radius: 1px; }
.wc { width: 48px; height: 32px; }

/* ribbon */
.pane { flex: none; padding: 0 8px 7px; background: linear-gradient(90deg, #dcebeb, #e5edf0 15%, #deedee 28%, #e6eae1 37%, #e2eaeb 56%, #e6ebe8 70%, #e4ecef 85%, #e2ebef); }
.rtabs { display: flex; height: 30px; align-items: center; gap: 20px; padding: 0 4px 2px 10px; font-size: 14px; }
.rtabs button { height: 26px; }
.rtabs .cur { margin: 0 1px; padding: 0 1px; box-shadow: inset 0 -2px #107c41; font-weight: 700; }
.rtabs .share { margin-left: auto; width: 64px; height: 24px; gap: 5px; background: #107c41; color: #fff; border-radius: 4px; font-size: 13px; }
.ribbon { display: flex; height: 101px; padding: 5px 0; background: #fff; border-radius: 8px; box-shadow: 0 1px 3px #0004; }
.rg { display: flex; flex-direction: column; border-right: 1px solid #d0d0d0; }
.rbody { flex: 1; display: flex; align-items: flex-start; }
.rg footer { position: relative; height: 14px; line-height: 16px; text-align: center; white-space: nowrap; }
.rg footer.opt { padding-right: 14px; }
.rg footer button { position: absolute; right: 3px; top: 4px; }
.rows { display: flex; flex-direction: column; align-items: stretch; gap: 8px; padding-top: 7px; }
.row { display: flex; height: 24px; align-items: center; }
.big { flex-direction: column; padding-top: 4px; justify-content: flex-start; }
.big span { height: 16px; display: flex; align-items: center; gap: 4px; }
.big .bi { height: 32px; }
.big[disabled] { color: #b8b8b8; }
.list { display: flex; flex-direction: column; align-items: flex-start; gap: 4px; }
.list button { height: 22px; gap: 4px; }
.far { margin-left: 7px; }
.tool { width: 26px; height: 24px; flex: none; }
.tool.on { width: 24px; margin: 0 1px; background: #ebebeb; border: 1px solid #777; border-radius: 4px; }
.tool.b { font-weight: 700; font-size: 12px; }
.tool.it { font-style: italic; font-size: 12px; }
.tool.u { font-size: 12px; text-decoration: underline; text-underline-offset: 3px; }
.tool .sup { align-self: flex-start; margin-top: 3px; }
.tool.lg { font-size: 14px; }
.cv { width: 12px; height: 24px; }
.tsep { width: 1px; height: 24px; background: #d0d0d0; margin: 0 1px 0 4px; }
.asep { width: 1px; height: 24px; background: #d0d0d0; margin: 0 1px; }
.bsep { width: 1px; height: 62px; background: #d0d0d0; margin: 6px 10px 0 5px; }
.fc { height: 16px; border-bottom: 4px solid red; width: 16px; margin: 0 5px 0 8px; font-weight: 700; font-size: 12px; line-height: 12px; }
.ruby { flex-direction: column; font-size: 9px; line-height: 9px; align-items: flex-end; padding-right: 4px; color: #777; }
.sel { display: flex; align-items: center; width: 100%; height: 24px; padding: 0 2px 0 3px; border: 1px solid #8a8a8a; border-radius: 4px; }
.sel select { flex: 1; min-width: 0; appearance: none; }
.fname { width: 170px; margin-right: 2px; }
.fsize { width: 40px; margin-right: 2px; }
.pct { font-size: 17px; margin-left: 4px; }
.dec { flex-direction: column; align-items: flex-end; font: 10px/12px "Liberation Sans", sans-serif; padding-right: 4px; }
.dec span { display: flex; align-items: center; height: 12px; }
.g-clip { width: 160px; }
.g-clip .rbody { padding-left: 15px; }
.paste { width: 48px; margin-right: 8px; }
.g-font { width: 280px; }
.g-font .rbody { padding-left: 8px; }
.g-align { width: 325px; }
.g-align .left { width: 139px; padding-left: 7px; }
.left .cv { margin-left: -4px; }
.wrapcol { align-items: flex-start; }
.wide { height: 24px; gap: 5px; }
.g-num { width: 162px; }
.g-num .rbody { padding: 7px 7px 0 8px; }
.g-style { width: 338px; }
.g-style .rbody { padding-left: 7px; }
.g-style .big { width: 44px; }
.gallery { flex: none; display: flex; width: 230px; height: 62px; margin: 7px 0 0 2px; border: 1px solid #c8c8c8; border-radius: 4px; }
.cells { flex: 1; display: grid; grid-template-columns: 104px 100px; grid-template-rows: 28px 22px; gap: 3px 4px; padding: 2px; }
.cells button { justify-content: flex-start; padding: 0 0 4px 5px; font-size: 16px; }
.cells .c-std { border: 1px solid #555; box-shadow: inset 0 0 0 2px #fff, inset 0 0 0 3px #ddd; padding-left: 6px; color: #000; }
.c-bad { background: #ffc7ce; color: #9c0006; height: 22px; margin-top: 3px; }
.c-neu { background: #ffeb9c; color: #9c5700; margin: 0 2px; }
.c-good { background: #c6efce; color: #006100; }
.gscroll { width: 15px; margin: -1px; display: flex; flex-direction: column; }
.gscroll button { flex: 1; border: 1px solid #555; }
.gscroll button:last-child { border-radius: 0 0 4px 0; }
.gscroll .off { color: #bbb; border-color: #c8c8c8; border-radius: 0 4px 0 0; }
.g-cell { width: 146px; }
.g-cell .rbody { padding-left: 7px; }
.g-cell .big { width: 44px; }
.g-edit { width: 211px; }
.g-edit .rbody { padding-left: 12px; }
.g-edit .list { width: 97px; }
.g-edit .big { width: 47px; }
.g-add { width: 59px; }
.g-adobe { width: 89px; }
.g-add .rbody, .g-adobe .rbody { justify-content: center; }
.collapse { margin: auto 12px 0 auto; height: 20px; }

/* formula bar */
.fbar { display: flex; align-items: center; gap: 4px; margin-top: 8px; height: 28px; }
.box { display: flex; align-items: center; height: 28px; background: #fff; border: 1px solid #d0d0d0; border-radius: 4px; padding: 0 4px 0 6px; font-size: 14px; }
.box input { flex: 1; min-width: 0; }
.name { width: 102px; }
.dots { width: 4px; height: 12px; margin: 0 4px; }
.fx { width: 74px; justify-content: space-between; color: #aaa; }
.fxb { color: #222; font: italic 400 20px/20px "Liberation Serif", serif; }
.formula { flex: 1; }

/* workbook tabs */
.otabs { flex: none; height: 25px; display: flex; align-items: flex-end; padding: 0 1px; background: #fff; }
.ot { width: 114px; height: 23px; gap: 5px; background: #9fd8b9; border: 1px solid #999; border-bottom: 0; border-radius: 4px 4px 0 0; font-size: 13px; }
.otabs .vx { color: #aaa; margin-left: 2px; }
.ot-new { width: 29px; height: 21px; margin-left: 2px; border: 1px solid #999; border-bottom: 0; border-radius: 4px 4px 0 0; }
.ob { width: 19px; height: 19px; margin: 0 0 2px 2px; background: #eee; border: 1px solid #bbb; color: #333; }
.ob.first { margin-left: auto; }

/* worksheet */
.sheet { flex: 1; min-height: 0; display: flex; background: #e2eef0; }
.cells-view { flex: 1; min-width: 0; overflow: hidden; background: #fff; border: 1px solid #999; border-left: 0; }
.cells-table { table-layout: fixed; width: 1906px; border-spacing: 0; font-size: 13px; line-height: 16px; color: #000; }
.gutter { width: 34px; }
.cells-table th, .cells-table td { height: 22px; padding: 0; font-weight: 400; border-right: 1px solid #dedede; border-bottom: 1px solid #dedede; }
.cells-table th { background: #efefef; border-color: #b4b4b4; }
.cells-table thead th { border-bottom-color: #999; padding-bottom: 4px; }
.cells-table tbody th { border-right-color: #999; }
.cells-table th.cur { background: #d2d2d2; color: #217346; }
.cells-table .corner { border-right-color: #d0d0d0; }
.corner svg { width: 14px; height: 14px; margin: 2px 2px 0 auto; }
.picked { position: relative; }
.picked i { position: absolute; inset: -2px; border: 2px solid #217346; }
.picked i::after { content: ""; position: absolute; right: -3px; bottom: -3px; width: 5px; height: 5px; background: #217346; outline: 1px solid #fff; }
.vscroll { width: 17px; margin: 2px 2px 0 2px; padding: 2px 0 0; display: flex; flex-direction: column; align-items: center; gap: 2px; background: #f5f5f5; border-radius: 8px; }
.vscroll i { flex: 1; width: 9px; background: #707070; border-radius: 5px; margin-bottom: 14px; }

/* sheet tabs and horizontal scroll */
.sbar { flex: none; height: 28px; display: flex; align-items: flex-start; padding-left: 16px; border-bottom: 1px solid #c4c4c4; background: linear-gradient(90deg, #e3ecdb, #e8ead6 28%, #efecdf 48%, #f1ede8 56%, #deeff0 68%, #dcecec 80%, #e0eced); }
.snav { display: flex; align-items: flex-start; width: 206px; height: 27px; background: #e6e6e6; }
.snav button { width: 28px; height: 24px; }
.snav .stab { width: 66px; margin-left: 28px; background: #fff; color: #217346; border: 1px solid #999; border-top: 0; border-bottom: 2px solid #217346; height: 25px; font-size: 13px; }
.snav .splus { margin-left: 27px; height: 26px; }
.sbar .dots { margin: 8px 12px 0 auto; }
.hscroll { width: 734px; height: 17px; margin: 4px 19px 0 0; padding: 0 3px; display: flex; align-items: center; gap: 2px; background: #f5f5f5; border-radius: 8px; }
.hscroll i { flex: 1; height: 9px; background: #707070; border-radius: 5px; margin-right: 5px; }
.status { flex: none; height: 22px; display: flex; align-items: center; padding: 0 8px 1px 11px; background: #f4f4f4; border-bottom: 1px solid #aebfa6; }
.acc { gap: 3px; margin-left: 19px; }
.views { display: flex; margin-left: auto; }
.views button { width: 40px; height: 20px; }
.views .on { background: #dedede; }
.zoom { display: flex; align-items: center; gap: 5px; margin-left: 8px; font-size: 12px; }
.zoom span { margin-left: 7px; }
.zoom input { appearance: none; width: 100px; height: 12px; background: linear-gradient(#666, #666) center / 100% 1px no-repeat; }
.zoom input::-webkit-slider-thumb { appearance: none; width: 5px; height: 11px; background: #666; }

/* taskbar */
.taskbar { flex: none; height: 47px; display: grid; grid-template-columns: 1fr auto 1fr; align-items: center; background: linear-gradient(90deg, #d9edb6, #d0eabd 14%, #dbe8bc 16%, #cfe8bd 19%, #daeeb0 22%, #d1e6c4 32%, #e9e5ae 39%, #dff0a4 45%, #ddeda8 49%, #f3e8b4 52%, #f5e6ca 56%, #fbe9d9 61%, #f1e9e6 67%, #d3f4ec 71%, #c8f7ee 74%, #cbf6f4 84%, #bdf0ee 92%, #c0ebe9); color: #222; font-size: 12px; }
.weather { display: flex; gap: 8px; align-items: center; padding: 0 0 2px 19px; font-size: 13px; color: #5c6850; }
.weather b { font-weight: 400; font-size: 12px; color: #222; }
.apps { display: flex; align-items: center; gap: 20px; padding-left: 9px; }
.apps .start { margin-right: -6px; }
.tsearch { display: flex; align-items: center; gap: 10px; width: 218px; height: 31px; padding: 0 6px 0 11px; margin-right: -7px; background: #fffc; border: 1px solid #c4cba5; border-radius: 16px; }
.tsearch input { flex: 1; min-width: 0; font-size: 14px; }
.tsearch input::placeholder { color: #555; opacity: 1; }
.apps .xl-task { gap: 9px; height: 39px; padding: 0 7px; margin-left: -7px; background: #fffa; border: 1px solid #e2dedb; border-radius: 4px; }
.xl-task span { height: 37px; padding-top: 6px; border-bottom: 3px solid #0f78d4; display: flex; }
.tray { display: flex; align-items: center; justify-content: flex-end; gap: 15px; padding: 0 20px 2px 0; }
.tray time { text-align: right; }
.tray svg:first-child { margin-right: 3px; }
.tray svg:nth-of-type(5) { margin-left: -7px; }
.tray svg:last-child { margin-left: -7px; }

.vm-status { flex: none; height: 21px; display: flex; align-items: center; padding: 0 0 1px 2px; background: #e3e4e6; color: #000; }
.dev { display: flex; align-items: center; gap: 5px; margin-left: auto; height: 20px; }
.dev i { width: 1px; height: 16px; background: #aaa; margin: 0 4px 0 1px; }
.grip { margin: 6px 0 0 4px; }
```
